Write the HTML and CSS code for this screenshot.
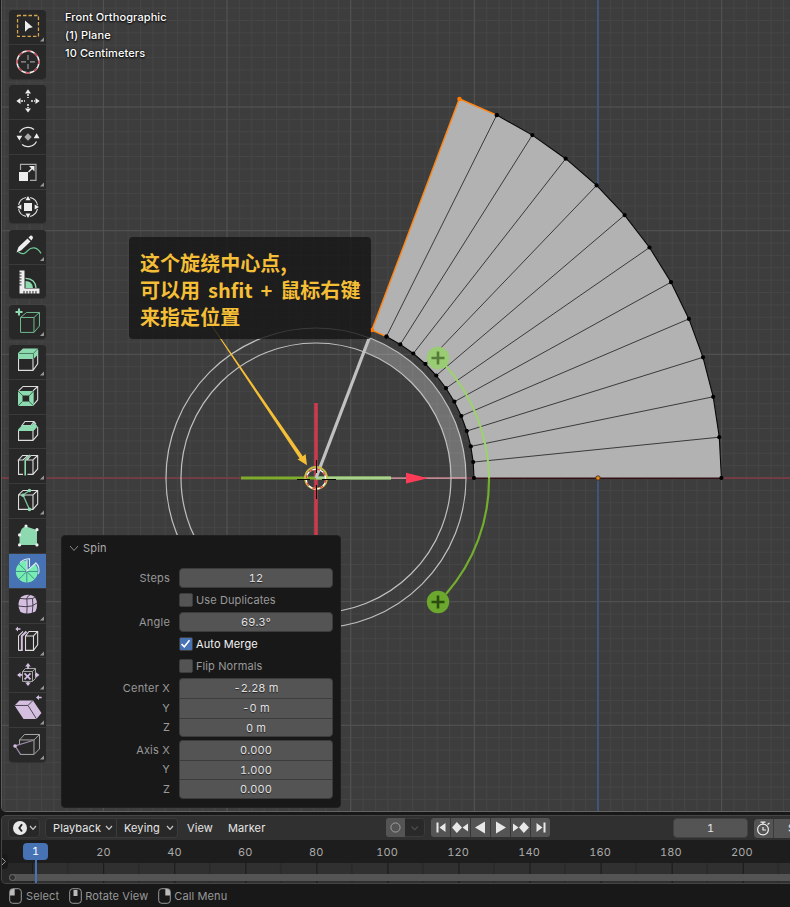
FILE: index.html
```html
<!DOCTYPE html>
<html lang="zh-CN">
<head>
<meta charset="utf-8">
<title>Spin Tool</title>
<link rel="stylesheet" href="styles.css">
</head>
<body>
<div class="app">
  <main class="viewport">
    <svg class="scene" width="790" height="811" viewBox="0 0 790 811">
      <defs>
        <pattern id="minor" width="12.365" height="12.365" patternUnits="userSpaceOnUse" x="597.5" y="477.5"><path d="M.5 0V12.4M0 .5H12.4" stroke="#454545" fill="none"/></pattern>
        <pattern id="major" width="123.65" height="123.65" patternUnits="userSpaceOnUse" x="597.5" y="477.5"><path d="M.5 0V123.7M0 .5H123.7" stroke="#525252" fill="none"/></pattern>
        <marker id="dot" markerUnits="userSpaceOnUse" markerWidth="5" markerHeight="5" refX="2.5" refY="2.5"><circle cx="2.5" cy="2.5" r="2.1" fill="#000"/></marker>
        <g id="plus"><circle r="11.2" stroke="none"/><path d="M-6.5 0H6.5M0-6.5V6.5" stroke-width="2.6"/></g>
      </defs>
      <rect width="790" height="811" fill="#3d3d3d"/>
      <rect width="790" height="811" fill="url(#minor)"/>
      <rect width="790" height="811" fill="url(#major)"/>
      <path d="M0 478.2H790" stroke="#8b3442" stroke-width="1.3"/>
      <path d="M598 0V811" stroke="#365d94" stroke-width="1.3"/>

      <path d="M474 478L473.2 462.1 470.8 446.4 466.8 431 461.3 416 454.4 401.7 446 388.2 436.3 375.5 425.4 364 413.3 353.5 400.3 344.4 386.4 336.6 371.8 330.2 459.3 98.8 496.7 115.1 532.3 135.1 565.7 158.7 596.6 185.4 624.6 215.1 649.5 247.5 671 282.2 688.9 318.9 703 357.3 713.2 396.8 719.3 437.2 721.4 478Z" fill="#b2b2b2"/>
      <path d="M473.2 462.1L719.3 437.2M470.8 446.4L713.2 396.8M466.8 431L703 357.3M461.3 416L688.9 318.9M454.4 401.7L671 282.2M446 388.2L649.5 247.5M436.3 375.5L624.6 215.1M425.4 364L596.6 185.4M413.3 353.5L565.7 158.7M400.3 344.4L532.3 135.1M386.4 336.6L496.7 115.1" stroke="#1c1c1c" stroke-width=".8"/>
      <path d="M474 478.3H721.4" stroke="#351116" stroke-width="1.5"/>
      <g fill="none" stroke="#080808" stroke-width="1.1" marker-start="url(#dot)" marker-mid="url(#dot)" marker-end="url(#dot)">
        <path d="M474 478L473.2 462.1 470.8 446.4 466.8 431 461.3 416 454.4 401.7 446 388.2 436.3 375.5 425.4 364 413.3 353.5 400.3 344.4 386.4 336.6"/>
        <path d="M496.7 115.1L532.3 135.1 565.7 158.7 596.6 185.4 624.6 215.1 649.5 247.5 671 282.2 688.9 318.9 703 357.3 713.2 396.8 719.3 437.2 721.4 478"/>
      </g>
      <path d="M386.4 336.6L371.8 330.2 459.3 98.8 496.7 115.1" fill="none" stroke="#ff8411" stroke-width="1.4"/>
      <circle cx="386.4" cy="336.6" r="2.1"/><circle cx="496.7" cy="115.1" r="2.1"/>
      <circle cx="372" cy="330" r="2.2" fill="#ff7a00"/><circle cx="459.4" cy="99" r="2.2" fill="#ff7a00"/>
      <circle cx="598" cy="478" r="2.2" fill="#e58b22" stroke="#4a2a0a" stroke-width=".9"/>

      <path d="M316 403V553" stroke="#cc3a4e" stroke-width="3.6"/>
      <path d="M241 478H316" stroke="#80ac2c" stroke-width="3.2"/>
      <path d="M316 478H391" stroke="#94c672" stroke-width="3.4"/>
      <path d="M316 478H391" stroke="#c0dcac" stroke-width="1.2"/>
      <path d="M391 478.2H466" stroke="#d8a5ad" stroke-width="1.2"/>
      <path d="M451 478A135 135 0 0 0 363.7 351.7L369 337.7A150 150 0 0 1 466 478Z" fill="#fff" fill-opacity=".27"/>
      <circle cx="316" cy="478" r="150" fill="none" stroke="#c0c0c0" stroke-width="1.2"/>
      <circle cx="316" cy="478" r="135" fill="none" stroke="#c0c0c0" stroke-width="1.2"/>
      <path d="M316 478L369 338.5" stroke="#c1c1c1" stroke-width="3.2"/>
      <path d="M406 472.8L428 478.2 406 483.5Z" fill="#ff3c58"/>
      <path d="M446 366A173 173 0 0 1 489 478" fill="none" stroke="#9cd36c" stroke-width="2"/>
      <path d="M489 478A173 173 0 0 1 446 594" fill="none" stroke="#72ad2e" stroke-width="2.2"/>
      <use href="#plus" x="438" y="358" fill="#9acd73" stroke="#567b3b"/><use href="#plus" x="438" y="602" fill="#6ca72e" stroke="#2b4c0e"/>
      <circle cx="316" cy="478" r="11" fill="none" stroke="#cbbb46" stroke-width="1.8"/>
      <circle cx="316" cy="479" r="9.8" fill="none" stroke="#fff" stroke-width="1.3"/>
      <circle cx="316" cy="479" r="9.8" fill="none" stroke="#e24a33" stroke-width="1.3" stroke-dasharray="3.85"/>
      <path d="M297 479.5H310M322 479.5H336M316.5 460V473M316.5 485V499" stroke="#000" stroke-width="1.1"/>
      <path d="M193 298L302.8 456.3 305.6 454 307 465.3 297.5 459.2 299.6 458.6Z" fill="#f4be37"/>
    </svg>

    <div class="caption">Front Orthographic<br>(1) Plane<br>10 Centimeters</div>

    <div class="note">这个旋绕中心点,<br>可以用 shfit + 鼠标右键<br>来指定位置</div>

    <aside class="toolbar">
      <div class="group">
        <svg class="tool" viewBox="9 10 37 34"><rect x="17.5" y="15.5" width="21" height="21" fill="none" stroke="#d5a550" stroke-width="1.3" stroke-dasharray="3.5 2"/><path d="M25 20.5L32.8 27.3 28.7 28.2 25 31.8Z" fill="#eee"/><path class="more" d="M44 37.5V41.5H40Z"/></svg>
        <svg class="tool" viewBox="9 44 37 34"><circle cx="28" cy="61" r="11" fill="none" stroke="#eee" stroke-width="1.5"/><circle cx="28" cy="61" r="11" fill="none" stroke="#c0444c" stroke-width="1.5" stroke-dasharray="4.32" stroke-dashoffset="2"/><path d="M21 61H26M30 61H35M28 54V59M28 63V68" stroke="#999" stroke-width="1.2"/></svg>
      </div>
      <div class="group">
        <svg class="tool" viewBox="9 85 37 34"><path d="M28 89.3L31 93.5H25ZM28 112.7L25 108.5H31ZM16.3 101L20.5 98V104ZM39.7 101L35.5 98V104Z" fill="#eee"/><path d="M28 94V98M28 104V108M21 101H25M31 101H35" stroke="#eee" stroke-width="1.5" stroke-dasharray="2 1"/></svg>
        <svg class="tool" viewBox="9 119 37 34"><path d="M19.5 131.5A9.6 9.6 0 0 1 34 128.5M36.5 140.5A9.6 9.6 0 0 1 22 143.5" fill="none" stroke="#e5e5e5" stroke-width="1.2"/><path d="M16.5 134.7H22.3L19.3 139.5ZM33.7 137.2H39.5L36.7 132.3ZM19.7 139Q20.4 141 22 143" fill="#eee"/><path d="M28 132.3L31.7 136 28 139.7 24.3 136Z" fill="#aaa"/></svg>
        <svg class="tool" viewBox="9 154 37 34"><path d="M20.5 169V163.5H36V179.5H30" fill="none" stroke="#aaa" stroke-width="1.2"/><path d="M19 171H28V180H19ZM29 165H34.5V170.5Z" fill="#eee"/><path d="M28.5 171L33 166.5" stroke="#eee" stroke-width="1.4"/><path class="more" d="M44 181.5V185.5H40Z"/></svg>
        <svg class="tool" viewBox="9 189 37 34"><circle cx="28" cy="206" r="9.7" fill="none" stroke="#ddd" stroke-dasharray="11.2 4" stroke-dashoffset="-2" stroke-width="1.1"/><path d="M24 202H32V210H24ZM28 195L30.5 199.3H25.5ZM28 217L25.5 212.7H30.5ZM17 206L21.3 203.5V208.5ZM39 206L34.7 203.5V208.5Z" fill="#eee"/></svg>
      </div>
      <div class="group">
        <svg class="tool" viewBox="9 230 37 34"><path d="M18.5 252C23 255 25 254 28 250.5S37 246 41 253.5" fill="none" stroke="#6fc896" stroke-width="1.3"/><path d="M16.5 252.5L18.5 247 27.5 238.5 30.5 241.5 21.3 250.3ZM28.5 237.5L30.6 235.5Q33 235 33 238L31.5 240.5Z" fill="#eee"/><path class="more" d="M44 257V261H40Z"/></svg>
        <svg class="tool" viewBox="9 264 37 34"><path d="M19.5 269.5H24.5V287.5H39.5V292.5H19.5Z" fill="#eee"/><path d="M19 272H21.5M19 275H21.5M19 278H21.5M19 281H21.5M19 284H21.5M24 293V290M27 293V290M30 293V290M33 293V290M36 293V290" stroke="#282828"/><path d="M25.5 287V280Q32.5 280 33 287Z" fill="#8edab0"/><path d="M25.5 277.5Q35.5 278 36 287" fill="none" stroke="#8edab0" stroke-width="1.3"/></svg>
      </div>
      <div class="group">
        <svg class="tool" viewBox="9 305 37 34"><path d="M20.5 317.5H34V332.5H20.5ZM20.5 317.5L26.5 312.5H39.5V326L34 332.5M34 317.5L39.5 312.5" fill="none" stroke="#70ba8f"/><path d="M15.5 312H22.5M19 308.5V315.5" stroke="#8edab0" stroke-width="2"/><path class="more" d="M44 332V336H40Z"/></svg>
      </div>
      <div class="group">
        <svg class="tool" viewBox="9 345 37 34"><path d="M18.5 354V370.5H33V354M33 370.5L37.7 364V350" class="line"/><path d="M18 353L23 348.5H38V354.5L33.5 359H18Z" fill="#8edab0"/><path d="M19 353.5H33.5V359M33.5 353.5L38 348.5" stroke="#3f7355" fill="none" stroke-width=".9"/><path class="more" d="M44 371.5V375.5H40Z"/></svg>
        <svg class="tool" viewBox="9 380 37 34"><path d="M18.5 391L23 386.5H37.7V400L33 405.5M33 391L37.7 386.5" class="line"/><path d="M18 391H33.7V406H18ZM22.5 395.5V401.5H29.2V395.5Z" fill="#8edab0" fill-rule="evenodd"/><path d="M18 391L23 396M33.7 391L29 396M18 406L22.5 401.5M33.7 406L29 401.5" stroke="#31694a"/></svg>
        <svg class="tool" viewBox="9 415 37 34"><path d="M18.5 430V440.5H33V430M33 440.5L37.7 435V427M21.5 426L25 421.5H34L36 424M22 425.5H31L34 421.5" class="line"/><path d="M18 431V429.5L22 425.3H31.5L34.5 422.5 37.7 426.5 33.5 431Z" fill="#8edab0"/></svg>
        <svg class="tool" viewBox="9 450 37 34"><path d="M18.5 461V475.5H23M27.5 475.5H33V461H27L31 456.5H37.7V470L33 475.5M33 461L37.7 456.5M18.5 461H23L28 456.5H22.5Z" class="line"/><path d="M25.2 476.5V461.5L30 456" fill="none" stroke="#8edab0" stroke-width="1.6"/><path class="more" d="M44 476.5V480.5H40Z"/></svg>
        <svg class="tool" viewBox="9 485 37 34"><path d="M18.5 496V510.5H33V496ZM18.5 496L23 491.5H37.7V505L33 510.5M33 496L37.7 491.5" class="line"/><path d="M29.5 491.5L23 496 29.5 510.5" fill="none" stroke="#76bb91" stroke-width="1.4"/><circle cx="29.5" cy="491.5" r="1.8" fill="#8edab0"/><circle cx="23" cy="496.3" r="1.8" fill="#8edab0"/><circle cx="29.5" cy="510.5" r="1.8" fill="#8edab0"/><path class="more" d="M44 511.5V515.5H40Z"/></svg>
        <svg class="tool" viewBox="9 519 37 34"><path d="M19.5 545V535Q21 527 26 526.5L37 530V545Z" fill="#8edab0"/><g fill="#eee"><circle cx="19.5" cy="535" r="1.6"/><circle cx="26" cy="526" r="1.6"/><circle cx="37" cy="529.7" r="1.6"/><circle cx="37" cy="545" r="1.6"/><circle cx="19.5" cy="545" r="1.6"/></g></svg>
        <svg class="tool active" viewBox="9 554 37 34"><path d="M26.8 571.5V560.5A11 11 0 1 0 37.8 571.5Q37.8 567.5 35 563.8Z" fill="#78edb1"/><path d="M26.8 571.5H38M26.8 571.5L34.5 579.3M26.8 571.5V582.5M26.8 571.5L19 579.3M26.8 571.5H15.5M26.8 571.5L19 564" stroke="#3b8489" stroke-width=".9"/><path d="M20 562.5Q24 558.8 29.5 558.8V567M35.5 562.5Q40.5 567 38.5 574M27 560V571L36 563" fill="none" stroke="#dce9f5" stroke-width="1.1"/></svg>
        <svg class="tool" viewBox="9 589 37 34"><path d="M21 597Q28 592.5 35 597 39 604 35.5 611.5 28 615.5 20.5 612 16 604.5 21 597Z" fill="#d5bfe1"/><path d="M18 606Q25 607.5 32 606L38 602.5M26.8 598Q27.5 605 26.8 614M32.5 598.5Q33.5 605 32.2 613.5M20 598.5Q26 599.5 32.5 598.5L36 597M27 598Q28 595.5 30 595" fill="none" stroke="#37313c" stroke-width=".9"/><path class="more" d="M44 616.5V620.5H40Z"/></svg>
        <svg class="tool" viewBox="9 624 37 34"><path d="M25.5 636V650.5H33.5V636ZM25.5 636L29 631.5H37.7V645L33.5 650.5M33.5 636L37.7 631.5M18.5 650.5V636L23 631.5M18.5 650.5H21" class="line"/><path d="M21.8 651V636L26.5 631.5" fill="none" stroke="#d5bfe1" stroke-width="2"/><path d="M15.3 629L18 626.5V628.2H20.5V629.8H18V631.5Z" fill="#d5bfe1"/><path class="more" d="M44 651.5V655.5H40Z"/></svg>
        <svg class="tool" viewBox="9 659 37 34"><path d="M22.5 672.5H32.5V682.5H22.5ZM22.5 672.5L25.5 669.5H35.5V679.5L32.5 682.5M32.5 672.5L35.5 669.5" fill="none" stroke="#aaa"/><path d="M28 664L30.8 667.5H25.2ZM28 687L25.2 683.5H30.8ZM17 676L20.5 673.2V678.8ZM39.5 676L36 673.2V678.8Z" fill="#d5bfe1"/><path d="M24.5 674.5L30.5 680.5M30.5 674.5L24.5 680.5M28 666V670M28 683V685M19 676H22M35 676H38" stroke="#d5bfe1" stroke-width="1.7"/><path class="more" d="M44 686.5V690.5H40Z"/></svg>
        <svg class="tool" viewBox="9 694 37 34"><path d="M14.5 706.5L19.5 701.5H33L41.5 714 36.5 720H23.5Z" fill="#d5bfe1"/><path d="M14.5 706.5H28L36.5 720M28 706.5L33 701.5" fill="none" stroke="#4c4452"/><path d="M36 698.5L39 696V697.8H41.7V699.3H39V701Z" fill="#d5bfe1"/><path class="more" d="M44 721.5V725.5H40Z"/></svg>
        <svg class="tool" viewBox="9 729 37 34"><path d="M19.5 745V741L24.5 735.5H39.5V750L34 755.5H20M19.5 741H34V755.5M34 741L39.5 735.5" fill="none" stroke="#aaa"/><path d="M20.5 755.5L15 747 33 741.5" fill="none" stroke="#9e8ba9" stroke-width="1.2"/><circle cx="15" cy="747" r="1.8" fill="#d5bfe1"/><path class="more" d="M44 756.5V760.5H40Z"/></svg>
      </div>
    </aside>

    <section class="panel">
      <header class="panel-head"><svg width="10" height="7" viewBox="0 0 10 7"><path d="M1 1L5 5.5 9 1"/></svg>Spin</header>
      <div class="row"><span class="label">Steps</span><span class="field">12</span></div>
      <div class="row check"><i class="box"></i>Use Duplicates</div>
      <div class="row"><span class="label">Angle</span><span class="field">69.3°</span></div>
      <div class="row check on"><i class="box"><svg width="13" height="13" viewBox="0 0 13 13"><path d="M2.5 7L5.3 9.8 10.5 3.2"/></svg></i>Auto Merge</div>
      <div class="row check"><i class="box"></i>Flip Normals</div>
      <div class="triple">
        <span class="label">Center X</span><span class="cell">-2.28 m</span>
        <span class="label">Y</span><span class="cell">-0 m</span>
        <span class="label">Z</span><span class="cell">0 m</span>
      </div>
      <div class="triple">
        <span class="label">Axis X</span><span class="cell">0.000</span>
        <span class="label">Y</span><span class="cell">1.000</span>
        <span class="label">Z</span><span class="cell">0.000</span>
      </div>
    </section>
  </main>

  <section class="timeline">
    <header class="bar">
      <span class="menu-box editor"><svg width="14" height="14" viewBox="0 0 14 14"><circle cx="7" cy="7" r="7" fill="#e8e8e8"/><path d="M9 3.2L6.3 7 9 10.5" fill="none" stroke="#252525" stroke-width="1.9"/></svg><svg class="caret" viewBox="0 0 8 6"><path d="M1 1L4 4.3 7 1"/></svg></span>
      <span class="menu-box playback">Playback<svg class="caret" viewBox="0 0 8 6"><path d="M1 1L4 4.3 7 1"/></svg></span>
      <span class="menu-box keying">Keying<svg class="caret" viewBox="0 0 8 6"><path d="M1 1L4 4.3 7 1"/></svg></span>
      <span class="menu view">View</span>
      <span class="menu">Marker</span>
      <svg class="record" width="40" height="20" viewBox="0 0 40 20"><rect x=".5" y=".5" width="38" height="18" rx="3" fill="#292929" stroke="#3b3b3b"/><path d="M3 0H19V19H3Q0 19 0 16V3Q0 0 3 0" fill="#545454"/><circle cx="9.5" cy="9.5" r="4.6" fill="none" stroke="#a0a0a0"/><path d="M25.5 8.5L28.7 11.7 32 8.5" fill="none" stroke="#4e4e4e" stroke-width="1.2"/></svg>
      <svg class="transport" width="119" height="20" viewBox="0 0 119 20"><rect width="119" height="19" rx="3" fill="#545454"/><path d="M19.5 0V19M39.5 0V19M59.5 0V19M79.5 0V19M99.5 0V19" stroke="#363636"/><path d="M5.5 4.5H7.5V14.5H5.5ZM14.5 5V14L8.5 9.5ZM25.8 4L31 9.5 25.8 15 21 9.5ZM37 5.5V13.5L31.5 9.5ZM54 3.5V15.5L44 9.5ZM65 3.5V15.5L75 9.5ZM82 5.5V13.5L87.5 9.5ZM92.8 4L98 9.5 92.8 15 88 9.5ZM105.5 5V14L111.5 9.5ZM112.5 4.5H114.5V14.5H112.5Z" fill="#e8e8e8"/></svg>
      <span class="frame">1</span>
      <span class="watch"><svg width="19" height="19" viewBox="0 0 19 19"><circle cx="9" cy="10.5" r="5.4"/><path d="M6.5 3.2H11.5M9 3V5M9 8V11H12M13.5 5.5L15.5 4"/></svg></span>
      <span class="start">Start</span>
    </header>
    <div class="ruler"><span>20</span><span>40</span><span>60</span><span>80</span><span>100</span><span>120</span><span>140</span><span>160</span><span>180</span><span>200</span></div>
    <div class="track"><svg width="789" height="20" viewBox="1 863 789 20"><defs><pattern id="ticks" width="71.05" height="20" patternUnits="userSpaceOnUse" x="32.2" y="863"><path d="M.5 0V20" stroke="#171717"/><path d="M35.5 0V20" stroke="#242424"/></pattern></defs><path d="M1 863H32V883H1Z" fill="#272727"/><rect x="32" y="863" width="758" height="20" fill="url(#ticks)"/></svg><div class="scroll"><i></i></div></div>
    <span class="cursor">1</span><i class="stem"></i>
    <svg class="expand" width="7" height="15" viewBox="0 0 7 15"><rect x="-4" width="11" height="15" rx="4" fill="#191919"/><path d="M1 4L4.5 7.5 1 11" fill="none" stroke="#999"/></svg>
  </section>

  <footer class="status">
    <span><svg width="13" height="16" viewBox="0 0 13 16"><rect x=".7" y=".7" width="11.6" height="14.6" rx="3"/><path d="M1 4Q1 1 4 1H5.7V7.5H1Z"/></svg>Select</span>
    <span><svg width="13" height="16" viewBox="0 0 13 16"><rect x=".7" y=".7" width="11.6" height="14.6" rx="3"/><path d="M4.5 2H8.5V8H4.5Z"/></svg>Rotate View</span>
    <span><svg width="13" height="16" viewBox="0 0 13 16"><rect x=".7" y=".7" width="11.6" height="14.6" rx="3"/><path d="M7.3 1H9Q12 1 12 4V7.5H7.3Z"/></svg>Call Menu</span>
  </footer>
</div>
</body>
</html>
```
FILE: styles.css
```css
* { box-sizing: border-box; }
body { margin: 0; background: #181818; font: 11px/14px Inter, "Noto Sans CJK SC", sans-serif; letter-spacing: .1px; color: #e6e6e6; }
.app { width: 790px; height: 907px; overflow: hidden; display: flex; flex-direction: column; }
svg { display: block; flex: none; }
i { display: block; }

.viewport { position: relative; height: 812px; flex: none; margin-left: 1px; overflow: hidden; border-left: 1px solid #5c5c5c; border-bottom: 1px solid #636363; border-bottom-left-radius: 5px; }
.scene { margin-left: -2px; }
.caption { position: absolute; left: 63px; top: 8px; line-height: 18px; font-weight: 500; letter-spacing: .1px; color: #fff; text-shadow: 0 1px 2px #000, 0 0 2px #111; }
.note { position: absolute; left: 127px; top: 237px; width: 242px; height: 102px; padding: 12px 0 0 11px; border-radius: 4px; background: rgba(20, 20, 20, .78); color: #f4be37; font: bold 20px/27px "Noto Sans CJK SC", sans-serif; letter-spacing: .05px; word-spacing: 3.2px; white-space: nowrap; }

.toolbar { position: absolute; left: 7px; top: 10px; width: 37px; display: flex; flex-direction: column; gap: 6.3px; }
.group { display: flex; flex-direction: column; gap: .95px; border-radius: 4px; overflow: hidden; background: #3a3a3a; box-shadow: 0 1px 1px #333; }
.tool { width: 37px; height: 33.9px; background: #282828; }
.tool.active { background: #4772b3; }
.more { fill: #999; }
.line { fill: none; stroke: #ddd; stroke-width: 1.1; }

.panel { position: absolute; left: 59px; top: 535px; width: 280px; height: 273px; background: #181818; border: 1px solid #202020; border-radius: 4px; color: #999; }
.panel-head { display: flex; align-items: center; gap: 4px; height: 24px; margin-bottom: 7px; padding-left: 7px; color: #aaa; letter-spacing: .2px; }
.panel-head svg { fill: none; stroke: #888; }
.row { display: flex; align-items: center; height: 22px; }
.label { width: 108px; margin-right: 9px; text-align: right; letter-spacing: .2px; }
.field { width: 154px; height: 20px; line-height: 19px; text-align: center; border-radius: 4px; background: #545454; border: 1px solid #3c3c3c; color: #e2e2e2; text-shadow: 0 1px 1px #222; font-variant-numeric: tabular-nums; }
.check { padding-left: 117px; }
.box { width: 14px; height: 14px; margin-right: 3px; border-radius: 2px; background: #545454; border: 1px solid #3d3d3d; }
.on { color: #f3f3f3; }
.on .box { background: #4772b3; }
.on svg { margin: -1px; fill: none; stroke: #fff; stroke-width: 1.6; }
.triple { display: grid; grid-template-columns: 117px 154px; grid-auto-rows: 19.8px; align-items: center; margin-top: 1px; margin-bottom: 2.4px; }
.cell { height: 19.8px; line-height: 18px; text-align: center; background: #545454; border: 1px solid #3c3c3c; border-bottom-width: 0; color: #e2e2e2; text-shadow: 0 1px 1px #222; font-variant-numeric: tabular-nums; }
.cell:nth-child(2) { border-radius: 4px 4px 0 0; }
.cell:last-child { border-radius: 0 0 4px 4px; border-bottom-width: 1px; }

.timeline { position: relative; flex: none; height: 69px; margin: 3px 0 0 1px; overflow: hidden; background: #303030; border: 1px solid #454545; border-right: 0; border-radius: 5px 0 0 5px; }
.bar { display: flex; height: 24px; align-items: center; padding-left: 6px; white-space: nowrap; }
.bar > * { flex: none; }
.menu-box { display: flex; align-items: center; justify-content: space-between; height: 20px; background: #282828; border: 1px solid #3b3b3b; border-radius: 4px; }
.caret { width: 8px; height: 6px; fill: none; stroke: #ccc; stroke-width: 1.2; }
.editor { width: 32px; padding: 0 2px 0 4px; margin-right: 5px; }
.playback { width: 72px; padding: 0 3px 0 7px; border-radius: 4px 0 0 4px; }
.keying { width: 61px; padding: 0 3px 0 7px; border-left: 0; border-radius: 0 4px 4px 0; }
.menu { width: 41px; }
.view { margin-left: 9px; }
.record { margin-left: 117px; }
.transport { margin-left: 5px; }
.frame { width: 75px; height: 20px; line-height: 19px; margin-left: 123px; border-radius: 4px; background: #545454; border: 1px solid #424242; text-align: center; font-variant-numeric: tabular-nums; }
.watch { width: 20px; height: 19px; margin-left: 6px; background: #545454; border-radius: 4px 0 0 4px; border-right: 1px solid #3b3b3b; }
.watch svg { fill: none; stroke: #eee; stroke-width: 1.2; }
.start { width: 60px; height: 19px; line-height: 19px; background: #545454; padding-left: 14px; }
.ruler { display: flex; height: 23px; padding-left: 66px; background: #1d1d1d; color: #aaa; line-height: 24px; font-variant-numeric: tabular-nums; }
.ruler span { flex: none; width: 70.95px; text-align: center; }
.track { position: relative; height: 20px; margin-left: -1px; }
.scroll { position: absolute; left: 8px; right: 0; top: 11px; height: 7px; border-radius: 4px 0 0 4px; background: #545454; }
.scroll i { width: 7px; height: 7px; border-radius: 50%; border: 1.5px solid #6a6a6a; background: #303030; }
.cursor { position: absolute; left: 21px; top: 27px; width: 25px; height: 17px; line-height: 17px; text-align: center; border-radius: 4px; background: #4772b3; color: #fff; font-variant-numeric: tabular-nums; }
.stem { position: absolute; left: 33px; top: 43px; width: 2px; height: 25px; background: #4772b3; }
.expand { position: absolute; left: -1px; top: 38px; }

.status { display: flex; gap: 10px; height: 23px; padding: 0 9px; align-items: center; color: #999; }
.status span { display: flex; align-items: center; gap: 3px; letter-spacing: .12px; }
.status span:first-child { gap: 4px; }
.status rect { fill: none; stroke: #999; }
.status path { fill: #bbb; }
```
